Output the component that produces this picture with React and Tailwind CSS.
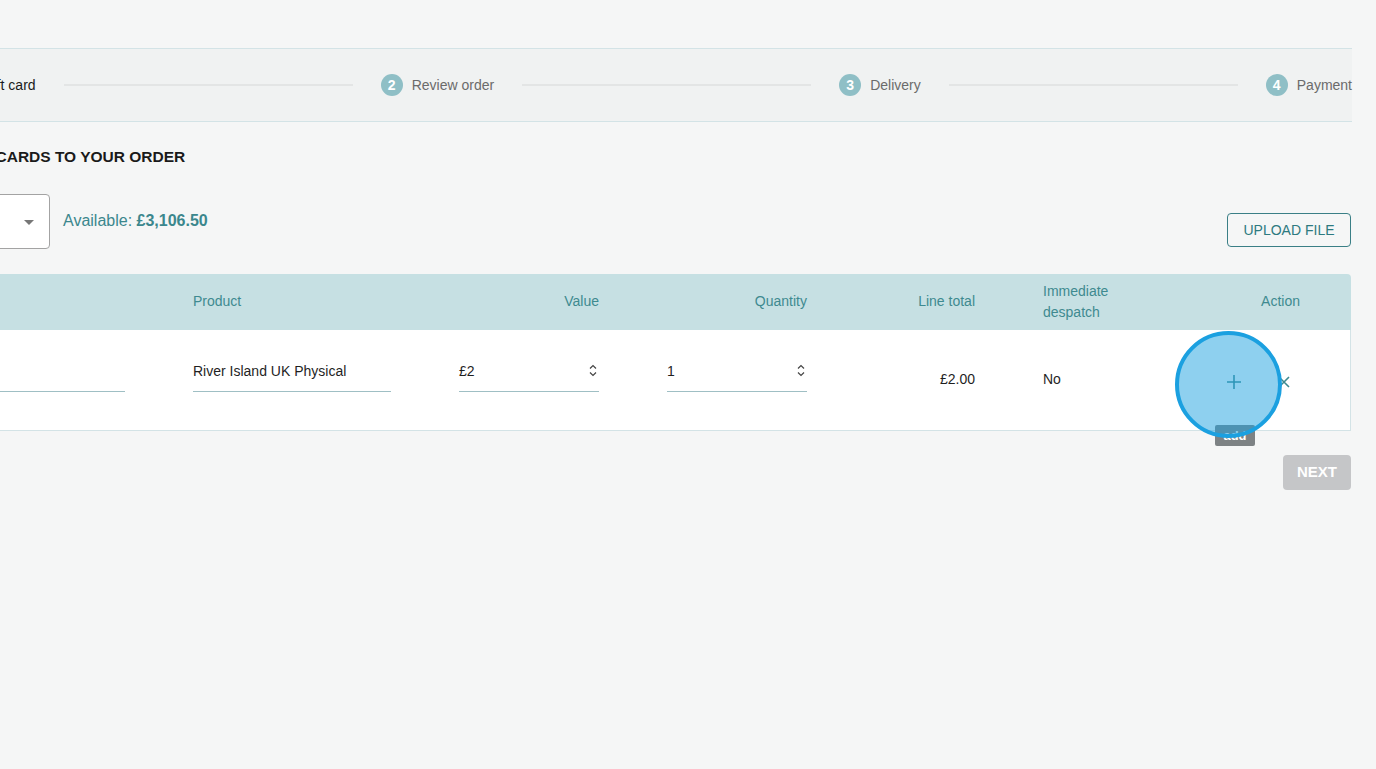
import React from 'react';

const steps = [
  { n: 1, label: 'Select gift card', active: true },
  { n: 2, label: 'Review order' },
  { n: 3, label: 'Delivery' },
  { n: 4, label: 'Payment' },
];

function Spinner() {
  return (
    <svg width="8" height="13" viewBox="0 0 8 13" fill="none" stroke="#444" strokeWidth="1.2">
      <path d="M1 4.5 L4 1.5 L7 4.5" />
      <path d="M1 8.5 L4 11.5 L7 8.5" />
    </svg>
  );
}

function LineInput({ value, spinner }) {
  return (
    <div className="mb-[8px] flex h-[31px] items-center justify-between border-b border-[#9fbfc4] pb-[9px] text-[14px] text-[#1f1f1f]">
      <span>{value}</span>
      {spinner && (
        <span className="mr-[2px] mt-[-2px]">
          <Spinner />
        </span>
      )}
    </div>
  );
}

export default function App() {
  return (
    <div className="relative h-[769px] w-[1376px] overflow-hidden bg-[#f5f6f6] font-['Liberation_Sans',Arial,sans-serif]">
      <div className="ml-[-92px] w-[1444px] pt-[48px]">
        {/* Stepper */}
        <div className="flex h-[74px] items-center border-y border-[#d3e3e6] bg-[#f0f2f2] pl-[4px]">
          {steps.map((s, i) => (
            <React.Fragment key={s.n}>
              {i > 0 && <div className="mx-[28px] h-[2px] flex-1 bg-[#e3e5e5]" />}
              <div className="flex items-center whitespace-nowrap">
                <span
                  className={`flex h-[22px] w-[22px] items-center justify-center rounded-full text-[14px] font-bold text-white ${
                    s.active ? 'bg-[#3e8a90]' : 'bg-[#8fbfc6]'
                  }`}
                >
                  {s.n}
                </span>
                <span className={`ml-[9px] text-[14px] ${s.active ? 'text-[#1a1a1a]' : 'text-[#6b6b6b]'}`}>
                  {s.label}
                </span>
              </div>
            </React.Fragment>
          ))}
        </div>

        <div className="flex flex-col pl-[15px] pr-[1px]">
          <h2 className="ml-[-5px] mt-[26px] text-[15.5px] font-bold leading-[18px] text-[#1a1a1a]">
            ADD GIFT CARDS TO YOUR ORDER
          </h2>

          <div className="mt-[28px] flex items-start justify-between">
            <div className="flex items-center">
              <div className="relative h-[55px] w-[127px] rounded-[4px] border border-[#a3a3a3] bg-white">
                <span className="absolute right-[15px] top-[25px] h-0 w-0 border-x-[5px] border-t-[5px] border-x-transparent border-t-[#777]" />
              </div>
              <span className="ml-[13px] mt-[-2px] text-[16px] text-[#3b878d]">
                Available: <b>£3,106.50</b>
              </span>
            </div>
            <button className="mt-[19px] h-[34px] w-[124px] rounded-[4px] border border-[#3a7f86] text-[14px] text-[#2d7a80]">
              UPLOAD FILE
            </button>
          </div>

          {/* Table */}
          <div className="mt-[25px] overflow-hidden rounded-t-[4px]">
            <div className="grid h-[56px] grid-cols-[236px_266px_208px_208px_168px_187px_1fr] items-center bg-[#c6e0e3] text-[14px] leading-[21px] text-[#3e8a90]">
              <div className="px-[34px]" />
              <div className="mt-[-2px] px-[34px]">Product</div>
              <div className="mt-[-2px] px-[34px] text-right">Value</div>
              <div className="mt-[-2px] px-[34px] text-right">Quantity</div>
              <div className="mt-[-2px] px-[34px] text-right">Line total</div>
              <div className="px-[34px]">
                Immediate
                <br />
                despatch
              </div>
              <div className="mt-[-2px] pr-[51px] text-right">Action</div>
            </div>
            <div className="grid h-[101px] grid-cols-[236px_266px_208px_208px_168px_187px_1fr] items-center border-b border-r border-[#d3e3e6] bg-white text-[14px] text-[#1f1f1f]">
              <div className="px-[34px]">
                <LineInput value="" />
              </div>
              <div className="px-[34px]">
                <LineInput value="River Island UK Physical" />
              </div>
              <div className="px-[34px]">
                <LineInput value="£2" spinner />
              </div>
              <div className="px-[34px]">
                <LineInput value="1" spinner />
              </div>
              <div className="mt-[-2px] px-[34px] text-right">£2.00</div>
              <div className="mt-[-2px] px-[34px]">No</div>
              <div className="mt-[4px] flex items-center pl-[31px]">
                <svg width="14" height="14" viewBox="0 0 14 14" stroke="#3e8a90" strokeWidth="1.6">
                  <path d="M7 0 V14 M0 7 H14" />
                </svg>
                <svg className="ml-[37px]" width="12" height="12" viewBox="0 0 12 12" stroke="#3e8a90" strokeWidth="1.6">
                  <path d="M1 1 L11 11 M11 1 L1 11" />
                </svg>
              </div>
            </div>
          </div>

          <button className="mt-[24px] h-[35px] w-[68px] self-end rounded-[4px] bg-[#c5c6c8] text-[15px] font-bold text-white">
            NEXT
          </button>
        </div>
      </div>

      {/* Tooltip + click highlight overlay */}
      <div className="absolute left-[1215px] top-[425px] flex h-[21px] w-[40px] items-center justify-center rounded-[2px] bg-[#7d8284] text-[13px] font-bold text-white">
        add
      </div>
      <div className="absolute left-[1175px] top-[331px] h-[107px] w-[107px] rounded-full border-4 border-[#1ba0e0] bg-[#1ea1e0]/50" />
    </div>
  );
}
